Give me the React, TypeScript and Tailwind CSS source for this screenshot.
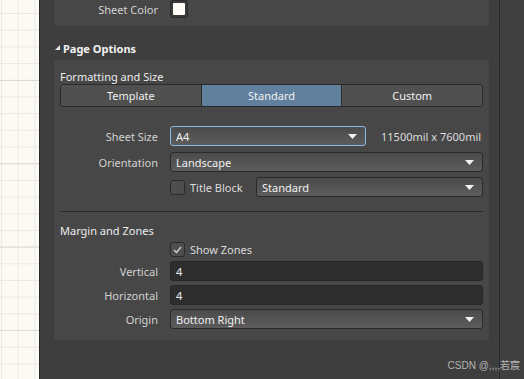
import React from "react";

const font = { fontFamily: '"Noto Sans", "Open Sans", Arial, sans-serif' };

function Arrow() {
  return (
    <svg width="9" height="5" viewBox="0 0 9 5" className="shrink-0">
      <path d="M0 0 H9 L4.5 5 Z" fill="#f2f2f2" />
    </svg>
  );
}

function Select({ value, focused, className = "" }: { value: string; focused?: boolean; className?: string }) {
  return (
    <div
      className={`h-[20px] flex items-center justify-between pl-[5px] pr-[8px] rounded-[3px] border bg-[linear-gradient(to_bottom,#4b4b4b,#5c5c5c)] text-[#f0f0f0] ${
        focused ? "border-[#8fb8e6]" : "border-[#2a2a2a]"
      } ${className}`}
    >
      <span>{value}</span>
      <Arrow />
    </div>
  );
}

function TextInput({ value }: { value: string }) {
  return (
    <div className="h-[20px] flex-1 flex items-center pl-[5px] rounded-[3px] border border-[#262626] bg-[#2e2e2e] text-[#f0f0f0]">
      {value}
    </div>
  );
}

function Check({ checked }: { checked?: boolean }) {
  return (
    <div className="w-[15px] h-[15px] shrink-0 rounded-[3px] border border-[#2a2a2a] bg-[#4e4e4e] flex items-center justify-center">
      {checked && (
        <svg width="9" height="8" viewBox="0 0 9 8">
          <path d="M1 4 L3.5 6.5 L8 1" stroke="#d8d8d8" strokeWidth="1.2" fill="none" />
        </svg>
      )}
    </div>
  );
}

function Row({ label, children, className = "" }: { label: string; children: React.ReactNode; className?: string }) {
  return (
    <div className={`flex items-center ${className}`}>
      <div className="w-[98px] shrink-0 text-right text-[#d2d2d2]">{label}</div>
      <div className="ml-[12px] flex-1 flex items-center">{children}</div>
    </div>
  );
}

export default function App() {
  return (
    <div className="relative w-[524px] h-[379px] flex overflow-hidden text-[11px] leading-none" style={font}>
      {/* sheet canvas strip */}
      <div className="w-[39px] h-full bg-[#fcfaf4] bg-[linear-gradient(to_bottom,#dcdad4_1px,transparent_1px),linear-gradient(to_right,#ece9e3_1px,transparent_1px),linear-gradient(to_bottom,#ece9e3_1px,transparent_1px)] bg-[size:100%_83.3px,16.7px_16.7px,16.7px_16.7px] bg-[position:0_80px,1px_0,0_13px]" />
      <div className="w-px h-full bg-[#2b2b2b]" />

      {/* properties panel */}
      <div className="w-[459px] h-full bg-[#3e3e3e] pl-[14px] pr-[10px]">
        <div className="-mt-[10px] h-[36px] rounded-[3px] bg-[#474747] pt-[10px] px-[6px]">
          <Row label="Sheet Color">
            <div className="w-[18px] h-[18px] rounded-[3px] border border-[#2a2a2a] bg-[#3a3a3a] p-[2px]">
              <div className="w-full h-full bg-[#fffbf7] rounded-[1px]" />
            </div>
          </Row>
        </div>

        <div className="h-[34px] flex items-start pt-[17px] pl-[1px] text-[#f2f2f2] font-bold">
          <svg width="5" height="5" viewBox="0 0 5 5" className="mr-[3px] mt-[2px]">
            <path d="M5 0 V5 H0 Z" fill="#e8e8e8" />
          </svg>
          Page Options
        </div>

        <div className="rounded-[3px] bg-[#474747] px-[6px] pt-[9px] pb-[11px]">
          <div className="h-[14px] flex items-center text-[#ececec]">Formatting and Size</div>
          <div className="h-[23px] flex rounded-[3px] border border-[#2a2a2a] mt-[1px] overflow-hidden text-[#efefef]">
            <div className="flex-1 flex items-center justify-center bg-[#505050] border-r border-[#2a2a2a]">Template</div>
            <div className="flex-1 flex items-center justify-center bg-[#60809e]">Standard</div>
            <div className="flex-1 flex items-center justify-center bg-[#505050] border-l border-[#2a2a2a]">Custom</div>
          </div>

          <Row label="Sheet Size" className="mt-[19px]">
            <Select value="A4" focused className="w-[196px] shrink-0" />
            <span className="ml-[15px] whitespace-nowrap text-[#dcdcdc]">11500mil x 7600mil</span>
          </Row>
          <Row label="Orientation" className="mt-[6px]">
            <Select value="Landscape" className="flex-1" />
          </Row>
          <Row label="" className="mt-[5px]">
            <Check />
            <span className="ml-[5px] text-[#dcdcdc] w-[66px] shrink-0">Title Block</span>
            <Select value="Standard" className="flex-1" />
          </Row>

          <div className="h-px bg-[#2a2a2a] mt-[14px]" />

          <div className="h-[14px] flex items-center text-[#ececec] mt-[11px]">Margin and Zones</div>
          <Row label="" className="mt-[5px]">
            <Check checked />
            <span className="ml-[5px] text-[#dcdcdc]">Show Zones</span>
          </Row>
          <Row label="Vertical" className="mt-[4px]">
            <TextInput value="4" />
          </Row>
          <Row label="Horizontal" className="mt-[4px]">
            <TextInput value="4" />
          </Row>
          <Row label="Origin" className="mt-[4px]">
            <Select value="Bottom Right" className="flex-1" />
          </Row>
        </div>
      </div>

      <div className="w-px h-full bg-[#2b2b2b]" />
      <div className="flex-1 h-full bg-[#404040]" />

      <span
        className="absolute right-[4px] top-[361px] whitespace-nowrap text-[#b4b4b4] text-[10px]"
        style={{ fontFamily: '"Liberation Sans", "Noto Sans CJK SC", sans-serif' }}
      >
        CSDN @,,,,若宸
      </span>
    </div>
  );
}
